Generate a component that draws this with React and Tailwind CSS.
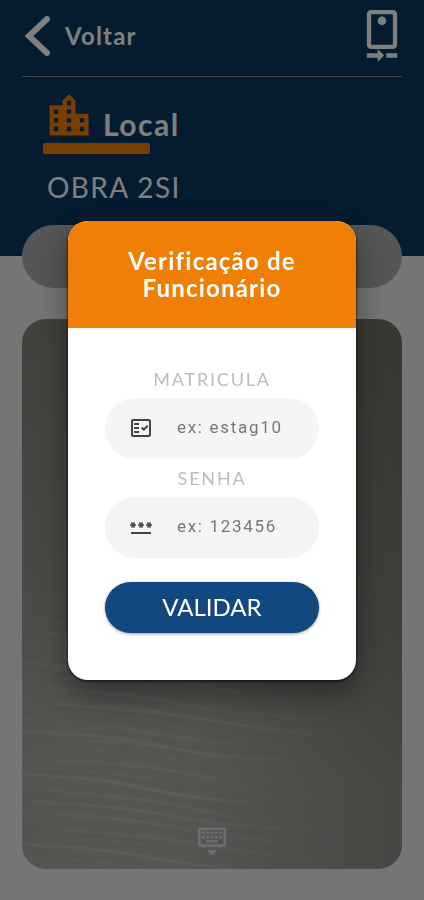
import React, { useState } from 'react';
import {
  MdLocationCity,
  MdOutlineCameraRear,
  MdOutlineFactCheck,
  MdOutlineKeyboardHide,
  MdPassword,
} from 'react-icons/md';

// Ripples of the surface the camera is pointing at
const RIPPLES = Array.from({ length: 54 }, (_, i) => {
  const y = 190 + i * 7;
  const start = (i * 37) % 60;
  const end = 200 + ((i * 53) % 120);
  const bend = (i % 3) * 2;
  return {
    d: `M${start - 20} ${y - 8} Q ${start + 70} ${y - 6 + bend} ${start + 120} ${y + 6} T ${end} ${y + 20 + bend}`,
    width: 1 + (i % 2),
    opacity: 0.2 + (i % 5) * 0.08,
  };
});

const CameraPreview = () => (
  <svg
    className="absolute inset-0 w-full h-full"
    viewBox="0 0 381 550"
    preserveAspectRatio="xMidYMid slice"
    aria-hidden="true"
  >
    <defs>
      <linearGradient id="surface" x1="0.5" y1="0" x2="0.4" y2="1">
        <stop offset="0" stopColor="#827f76" />
        <stop offset="0.5" stopColor="#94918a" />
        <stop offset="0.8" stopColor="#aba8a3" />
        <stop offset="1" stopColor="#aaa8a3" />
      </linearGradient>
      <linearGradient id="shade" x1="0.45" y1="0" x2="1" y2="0">
        <stop offset="0" stopColor="#2a2926" stopOpacity="0" />
        <stop offset="1" stopColor="#2a2926" stopOpacity="0.2" />
      </linearGradient>
      <radialGradient id="glow" cx="0.28" cy="0.88" r="0.62">
        <stop offset="0" stopColor="#fff" stopOpacity="1" />
        <stop offset="0.4" stopColor="#fff" stopOpacity="0.6" />
        <stop offset="1" stopColor="#fff" stopOpacity="0" />
      </radialGradient>
      <mask id="fade">
        <rect width="381" height="550" fill="url(#glow)" />
      </mask>
      <filter id="soft">
        <feGaussianBlur stdDeviation="0.8" />
      </filter>
    </defs>
    <rect width="381" height="550" fill="url(#surface)" />
    <rect width="381" height="550" fill="url(#shade)" />
    <g mask="url(#fade)">
      <g fill="none" stroke="#e0e4de" filter="url(#soft)">
        {RIPPLES.map((ripple) => (
          <path
            key={ripple.d}
            d={ripple.d}
            strokeWidth={ripple.width}
            strokeOpacity={ripple.opacity}
          />
        ))}
      </g>
    </g>
  </svg>
);

const Field = ({ id, label, icon, ...inputProps }) => (
  <div>
    <label
      htmlFor={id}
      className="block text-center text-lg leading-[38px] tracking-widest uppercase text-[#bdbdbd]"
    >
      {label}
    </label>
    <div className="flex items-center gap-6 h-[61px] pl-6 pr-4 rounded-full bg-[#f5f5f5] text-[#444]">
      {icon}
      <input
        id={id}
        className="flex-1 min-w-0 bg-transparent outline-none font-[Roboto,sans-serif] text-[17px] tracking-widest text-[#444] placeholder:text-[#777]"
        {...inputProps}
      />
    </div>
  </div>
);

const VerificationDialog = () => {
  const [matricula, setMatricula] = useState('');
  const [senha, setSenha] = useState('');

  const handleSubmit = (e) => {
    e.preventDefault();
  };

  return (
    <div className="fixed inset-0 flex items-center justify-center px-[68px] bg-black/50">
      <div
        role="dialog"
        aria-modal="true"
        aria-labelledby="dialog-title"
        className="w-full max-w-sm rounded-[20px] overflow-hidden bg-white shadow-[0_1px_2px_1px_rgba(0,0,0,0.5),0_14px_32px_rgba(0,0,0,0.4)]"
      >
        <div className="flex items-center justify-center h-[107px] px-10 bg-[#f07f05]">
          <h2
            id="dialog-title"
            className="text-center text-2xl leading-[27px] font-bold tracking-wider text-white"
          >
            Verificação de Funcionário
          </h2>
        </div>

        <form onSubmit={handleSubmit} className="px-[37px] pt-8 pb-[47px]">
          <Field
            id="matricula"
            label="Matricula"
            icon={<MdOutlineFactCheck size={24} />}
            placeholder="ex: estag10"
            value={matricula}
            onChange={(e) => setMatricula(e.target.value)}
          />
          <Field
            id="senha"
            label="Senha"
            icon={<MdPassword size={24} />}
            type="password"
            placeholder="ex: 123456"
            value={senha}
            onChange={(e) => setSenha(e.target.value)}
          />
          <button
            type="submit"
            className="w-full h-[51px] mt-6 rounded-full bg-[#13477f] text-2xl text-white shadow-[0_1px_3px_rgba(0,0,0,0.4)] cursor-pointer"
          >
            VALIDAR
          </button>
        </form>
      </div>
    </div>
  );
};

const App = () => {
  return (
    <div className="flex flex-col min-h-screen bg-[#ebebeb] font-[Lato,sans-serif]">
      {/* Header */}
      <header className="px-[22px] pb-[52px] bg-[#0a3860] text-white">
        <div className="flex items-center justify-between h-[77px] pb-1 border-b border-[#7c8791]">
          <button type="button" className="flex items-center gap-3 cursor-pointer">
            <svg className="w-[31px] h-[42px]" viewBox="0 0 31 42" fill="none" aria-hidden="true">
              <path
                d="M25 4 L7 21 L25 38"
                stroke="currentColor"
                strokeWidth="6"
                strokeLinecap="round"
                strokeLinejoin="miter"
              />
            </svg>
            <span className="text-2xl font-bold tracking-wider">Voltar</span>
          </button>
          <button type="button" aria-label="Trocar câmera" className="-mr-1.5 cursor-pointer">
            <MdOutlineCameraRear size={52} />
          </button>
        </div>

        <div className="px-[21px] pt-[13px]">
          <div className="flex items-end gap-2">
            <MdLocationCity size={52} className="text-[#f07f05]" />
            <h1 className="text-3xl leading-9 font-bold tracking-wider">Local</h1>
          </div>
          <div className="w-[107px] h-[11px] mt-px rounded-xs bg-[#f07f05]" />
          <p className="mt-4 px-1 text-[28px] leading-[34px] tracking-wider">OBRA 2SI</p>
        </div>
      </header>

      <main className="flex flex-col flex-1 px-[22px] pb-[31px]">
        <div className="h-[63px] -mt-[31px] rounded-full bg-[#acacac]" />

        {/* Camera */}
        <section className="relative flex flex-1 items-end justify-center mt-[31px] pb-3 rounded-3xl overflow-hidden">
          <CameraPreview />
          <button
            type="button"
            aria-label="Ocultar teclado"
            className="relative text-[#d9d9d9] cursor-pointer"
          >
            <MdOutlineKeyboardHide size={34} />
          </button>
        </section>
      </main>

      <VerificationDialog />
    </div>
  );
};

export default App;
